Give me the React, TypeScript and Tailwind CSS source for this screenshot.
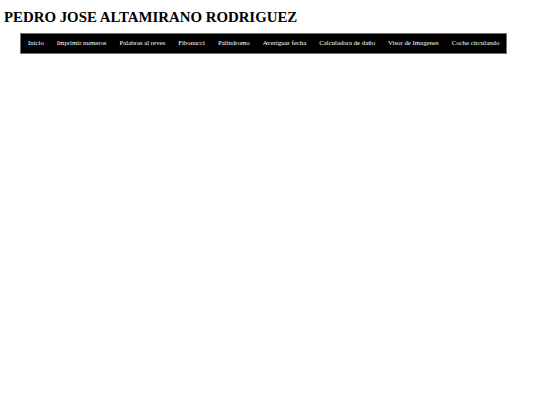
const links = [
  "Inicio",
  "Imprimir numeros",
  "Palabras al reves",
  "Fibonacci",
  "Palindromo",
  "Averiguar fecha",
  "Calculadora de daño",
  "Visor de Imagenes",
  "Coche circulando",
];

export default function App() {
  return (
    <div className="min-h-[405px] bg-white font-['Liberation_Serif',serif] text-black">
      <h1 className="pl-[4px] pt-[8px] text-[14.85px] font-bold leading-[18px]">
        PEDRO JOSE ALTAMIRANO RODRIGUEZ
      </h1>
      <nav className="ml-[20px] mt-[7px] w-[487px] border border-gray-500 bg-black">
        <ul className="flex h-[19px] items-center px-[0.5px]">
          {links.map((l) => (
            <li
              key={l}
              className="shrink-0 whitespace-nowrap px-[6.5px] text-[6.8px] leading-none text-white"
            >
              <a href="#">{l}</a>
            </li>
          ))}
        </ul>
      </nav>
    </div>
  );
}
